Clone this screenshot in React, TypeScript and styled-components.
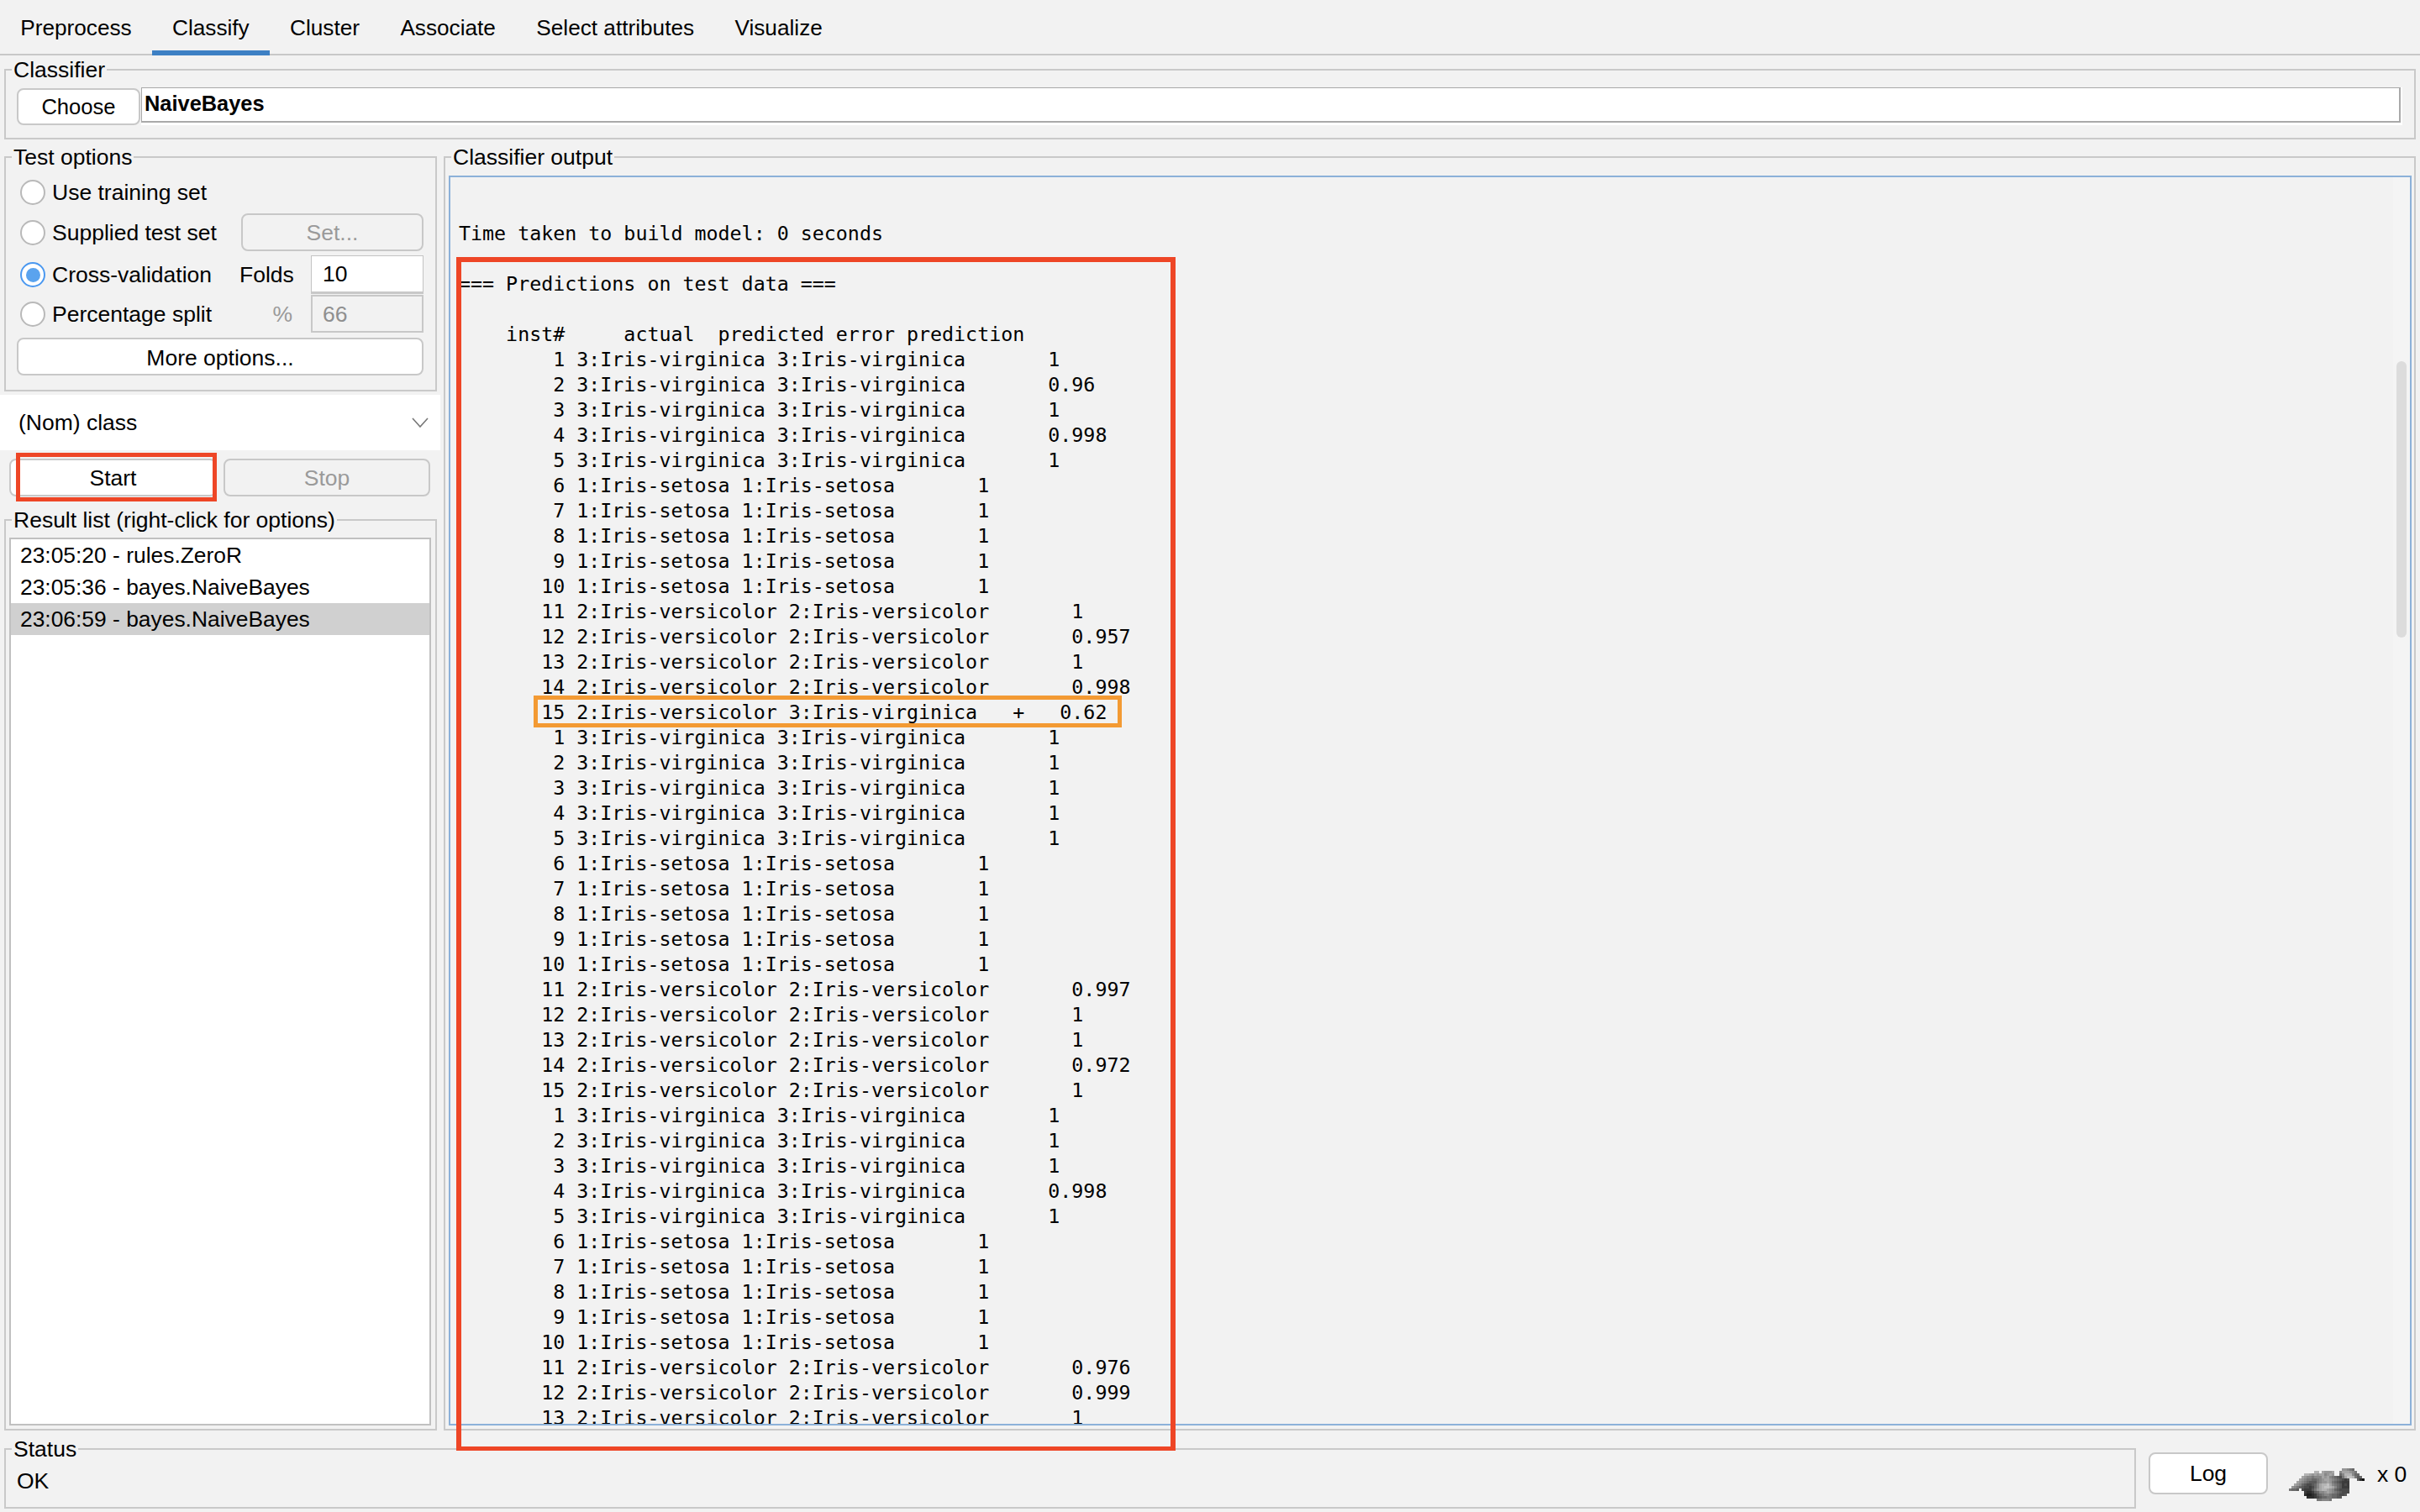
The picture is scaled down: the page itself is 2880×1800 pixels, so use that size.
import React from 'react'
import styled, { createGlobalStyle, css } from 'styled-components'

const GlobalStyle = createGlobalStyle`
  html, body {
    margin: 0;
    padding: 0;
    overflow: hidden;
    background: #f2f2f2;
  }
  * {
    box-sizing: border-box;
  }
`

const SANS = `"Liberation Sans", Arial, sans-serif`

const Page = styled.div`
  position: relative;
  width: 2880px;
  height: 1800px;
  display: flex;
  flex-direction: column;
  overflow: hidden;
  background: #f2f2f2;
  color: #000;
  font-family: ${SANS};
  font-size: 26.5px;
  line-height: 30px;
`

const TabBar = styled.div`
  display: flex;
  height: 66px;
  flex: none;
  box-shadow: inset 0 -2px 0 #c8c8c8;
`

const Tab = styled.div<{ $active?: boolean }>`
  height: 66px;
  padding: 6px 24.2px 0;
  display: flex;
  align-items: center;
  font-size: 26.2px;
  border-bottom: 6px solid ${(p) => (p.$active ? '#3d80c4' : 'transparent')};
`

const Body = styled.div`
  display: flex;
  flex-direction: column;
  padding: 16px 5px 0;
`

const Group = styled.div`
  position: relative;
  border: 2px solid #c9c9c9;
`

const GroupLabel = styled.span`
  position: absolute;
  left: 7px;
  top: -1px;
  transform: translateY(-50%);
  padding: 0 2px;
  background: #f2f2f2;
  white-space: nowrap;
`

const ClassifierGroup = styled(Group)`
  height: 84px;
  padding: 21px 0 0 13px;
`

const ClassifierRow = styled.div`
  display: flex;
  gap: 1px;
  padding-right: 14px;
`

const Button = styled.div<{ $disabled?: boolean }>`
  display: flex;
  align-items: center;
  justify-content: center;
  border: 2px solid #c8c8c8;
  border-radius: 8px;
  background: ${(p) => (p.$disabled ? '#f2f2f2' : '#fff')};
  color: ${(p) => (p.$disabled ? '#9a9a9a' : '#000')};
`

const ChooseButton = styled(Button)`
  width: 147px;
  height: 44px;
  flex: none;
  font-size: 25.6px;
`

const NameField = styled.div`
  flex: 1;
  height: 45px;
  margin-top: -1px;
  padding: 0 2px 3px 0;
  background: #fff;
`

const NameInner = styled.div`
  height: 42px;
  padding: 3px 0 0 3px;
  border: solid #a9a9a9;
  border-width: 1px 2px 2px 1px;
  font-size: 25.4px;
  font-weight: 700;
`

const MainGrid = styled.div`
  display: grid;
  grid-template-columns: 515px 2347px;
  grid-template-rows: 1517px;
  column-gap: 8px;
  height: 1517px;
  margin-top: 20px;
`

const LeftColumn = styled.div`
  display: flex;
  flex-direction: column;
  min-height: 0;
`

const TestGroup = styled(Group)`
  height: 280px;
  flex: none;
  padding: 19px 0 0 13px;
`

const OptionRow = styled.div<{ $height: number; $gap: number }>`
  display: grid;
  grid-template-columns: 267px 83px 134px;
  align-items: center;
  height: ${(p) => p.$height}px;
  margin-top: ${(p) => p.$gap}px;
`

const RadioLabel = styled.div`
  display: flex;
  align-items: center;
  gap: 8px;
  padding-left: 4px;
  white-space: nowrap;
`

const Radio = styled.span<{ $checked?: boolean }>`
  width: 30px;
  height: 30px;
  flex: none;
  border-radius: 50%;
  background: #fff;
  border: ${(p) => (p.$checked ? '2px solid #4a98f0' : '2px solid #b9b9b9')};
  display: flex;
  align-items: center;
  justify-content: center;

  &::after {
    content: '';
    display: ${(p) => (p.$checked ? 'block' : 'none')};
    width: 17px;
    height: 17px;
    border-radius: 50%;
    background: #5aa3ee;
  }
`

const SetButton = styled(Button)`
  grid-column: 2 / 4;
  height: 45px;
`

const FieldCaption = styled.span<{ $muted?: boolean }>`
  justify-self: ${(p) => (p.$muted ? 'end' : 'start')};
  margin-left: ${(p) => (p.$muted ? '0' : '-2px')};
  padding-right: ${(p) => (p.$muted ? '22px' : '0')};
  color: ${(p) => (p.$muted ? '#9a9a9a' : '#000')};
`

const FoldsField = styled.div`
  height: 46px;
  padding-left: 13px;
  display: flex;
  align-items: center;
  background: #fff;
  border: 1px solid #c4c4c4;
  border-bottom: 3px solid #c8c8c8;
`

const SplitField = styled.div`
  height: 45px;
  padding-left: 12px;
  display: flex;
  align-items: center;
  color: #8f8f8f;
  border: 2px solid #c8c8c8;
`

const MoreButton = styled(Button)`
  width: 484px;
  height: 45px;
  padding-top: 2px;
`

const ClassSelect = styled.div`
  flex: none;
  display: flex;
  align-items: center;
  justify-content: space-between;
  width: 524px;
  height: 66px;
  margin: 4px 0 0 -5px;
  padding: 0 14px 0 22px;
  background: #fff;
`

const RunRow = styled.div`
  flex: none;
  display: grid;
  grid-template-columns: 247px 246px;
  column-gap: 8px;
  height: 45px;
  margin-top: 10px;
  padding-left: 6px;
`

const ResultGroup = styled(Group)`
  flex: 1;
  min-height: 0;
  display: flex;
  margin-top: 27px;
  padding: 20px 5px 4px 4px;
`

const ResultList = styled.div`
  flex: 1;
  background: #fff;
  border: 2px solid #c0c0c0;
`

const ResultRow = styled.div<{ $selected?: boolean }>`
  height: 38px;
  padding-left: 11px;
  display: flex;
  align-items: center;
  font-size: 26.4px;
  background: ${(p) => (p.$selected ? '#d0d0d0' : 'transparent')};
`

const OutputGroup = styled(Group)`
  display: flex;
  min-height: 0;
  padding: 21px 3px 4px 4px;
`

const OutputBox = styled.div`
  position: relative;
  flex: 1;
  overflow: hidden;
  padding: 22px 0 0 10px;
  border: 2px solid #8cb1d9;
`

const OutputText = styled.pre`
  margin: 0;
  font-family: "DejaVu Sans Mono", monospace;
  font-size: 23.3px;
  line-height: 30px;
  color: #000;
`

const ScrollTrack = styled.div`
  position: absolute;
  top: 0;
  right: 0;
  bottom: 0;
  width: 20px;
  background: #f4f4f4;
`

const ScrollThumb = styled.div`
  position: absolute;
  top: 219px;
  right: 4px;
  width: 12px;
  height: 329px;
  border-radius: 6px;
  background: #dcdcdc;
`

const StatusRow = styled.div`
  display: flex;
  align-items: flex-start;
  margin-top: 21px;
`

const StatusGroup = styled(Group)`
  width: 2537px;
  height: 72px;
  flex: none;
  padding: 22px 0 0 13px;
`

const LogButton = styled(Button)`
  width: 142px;
  height: 50px;
  margin: 5px 0 0 15px;
  flex: none;
`

const BirdIcon = styled.svg`
  flex: none;
  margin: 24px 0 0 25px;
`

const TaskCount = styled.span`
  margin: 16px 0 0 15px;
  white-space: nowrap;
`

const frame = css`
  position: absolute;
  pointer-events: none;
`

const StartHighlight = styled.div`
  ${frame}
  left: 19px;
  top: 539px;
  width: 239px;
  height: 58px;
  border: 5px solid #ee4626;
`

const OutputHighlight = styled.div`
  ${frame}
  left: 543px;
  top: 306px;
  width: 856px;
  height: 1421px;
  border: 6px solid #ee4626;
  border-bottom-width: 5px;
`

const RowHighlight = styled.div`
  ${frame}
  left: 635px;
  top: 828px;
  width: 700px;
  height: 38px;
  border: 5px solid #f39a33;
`

const VIRGINICA = '3:Iris-virginica'
const SETOSA = '1:Iris-setosa'
const VERSICOLOR = '2:Iris-versicolor'

const row = (inst: number, label: string, prob: string) =>
  `${String(inst).padStart(9)} ${label} ${label}       ${prob}`

const block = (virginica: string[], versicolor: string[]) => [
  ...virginica.map((p, i) => row(i + 1, VIRGINICA, p)),
  ...[6, 7, 8, 9, 10].map((n) => row(n, SETOSA, '1')),
  ...versicolor.map((p, i) => row(i + 11, VERSICOLOR, p)),
]

const outputLines = [
  '',
  'Time taken to build model: 0 seconds',
  '',
  '=== Predictions on test data ===',
  '',
  '    inst#     actual  predicted error prediction',
  ...block(['1', '0.96', '1', '0.998', '1'], ['1', '0.957', '1', '0.998']),
  `       15 ${VERSICOLOR} ${VIRGINICA}   +   0.62`,
  ...block(['1', '1', '1', '1', '1'], ['0.997', '1', '1', '0.972', '1']),
  ...block(['1', '1', '1', '0.998', '1'], ['0.976', '0.999', '1']),
]

// weka bird, one hex grey level per 3px cell
const BIRD = [
  '.....................99876....',
  '..........bb.a999a..8aaa987...',
  '......bba9a9aa89a9..68bbb866..',
  '.....a9887888a9a87654' + '7accb756.',
  '....a987766789aa98765434...520',
  '...a98765557899a97654333......',
  '..a986544568abbca8765343......',
  '.98765443468abccba865333......',
  '7665.4333579abba98654444......',
  '......322356889a98765444......',
  '......21123567887665445.......',
  '.......22234566776655.........',
  '...........778887.............',
]

const Bird: React.FC = () => (
  <BirdIcon width="90" height="39" viewBox="0 0 90 39" shapeRendering="crispEdges">
    {BIRD.flatMap((line, y) =>
      line.split('').map((ch, x) => {
        if (ch === '.') return null
        const v = parseInt(ch, 16) * 15 + 15
        return <rect key={`${x}-${y}`} x={x * 3} y={y * 3} width="3" height="3" fill={`rgb(${v},${v},${v})`} />
      }),
    )}
  </BirdIcon>
)

const tabs = ['Preprocess', 'Classify', 'Cluster', 'Associate', 'Select attributes', 'Visualize']

const App: React.FC = () => {
  return (
    <Page>
      <GlobalStyle />
      <TabBar>
        {tabs.map((t) => (
          <Tab key={t} $active={t === 'Classify'}>
            {t}
          </Tab>
        ))}
      </TabBar>
      <Body>
        <ClassifierGroup>
          <GroupLabel>Classifier</GroupLabel>
          <ClassifierRow>
            <ChooseButton>Choose</ChooseButton>
            <NameField>
              <NameInner>NaiveBayes</NameInner>
            </NameField>
          </ClassifierRow>
        </ClassifierGroup>
        <MainGrid>
          <LeftColumn>
            <TestGroup>
              <GroupLabel>Test options</GroupLabel>
              <OptionRow $height={44} $gap={0}>
                <RadioLabel>
                  <Radio />
                  Use training set
                </RadioLabel>
              </OptionRow>
              <OptionRow $height={45} $gap={3}>
                <RadioLabel>
                  <Radio />
                  Supplied test set
                </RadioLabel>
                <SetButton $disabled>Set...</SetButton>
              </OptionRow>
              <OptionRow $height={46} $gap={5}>
                <RadioLabel>
                  <Radio $checked />
                  Cross-validation
                </RadioLabel>
                <FieldCaption>Folds</FieldCaption>
                <FoldsField>10</FoldsField>
              </OptionRow>
              <OptionRow $height={45} $gap={1}>
                <RadioLabel>
                  <Radio />
                  Percentage split
                </RadioLabel>
                <FieldCaption $muted>%</FieldCaption>
                <SplitField>66</SplitField>
              </OptionRow>
              <OptionRow $height={45} $gap={6}>
                <MoreButton>More options...</MoreButton>
              </OptionRow>
            </TestGroup>
            <ClassSelect>
              (Nom) class
              <svg width="20" height="12" viewBox="0 0 20 12" fill="none">
                <path d="M1 1l9 10 9-10" stroke="#777" strokeWidth="1.6" />
              </svg>
            </ClassSelect>
            <RunRow>
              <Button>Start</Button>
              <Button $disabled>Stop</Button>
            </RunRow>
            <ResultGroup>
              <GroupLabel>Result list (right-click for options)</GroupLabel>
              <ResultList>
                <ResultRow>23:05:20 - rules.ZeroR</ResultRow>
                <ResultRow>23:05:36 - bayes.NaiveBayes</ResultRow>
                <ResultRow $selected>23:06:59 - bayes.NaiveBayes</ResultRow>
              </ResultList>
            </ResultGroup>
          </LeftColumn>
          <OutputGroup>
            <GroupLabel>Classifier output</GroupLabel>
            <OutputBox>
              <OutputText>{outputLines.join('\n')}</OutputText>
              <ScrollTrack>
                <ScrollThumb />
              </ScrollTrack>
            </OutputBox>
          </OutputGroup>
        </MainGrid>
        <StatusRow>
          <StatusGroup>
            <GroupLabel>Status</GroupLabel>
            OK
          </StatusGroup>
          <LogButton>Log</LogButton>
          <Bird />
          <TaskCount>x 0</TaskCount>
        </StatusRow>
      </Body>
      <StartHighlight />
      <OutputHighlight />
      <RowHighlight />
    </Page>
  )
}

export default App
